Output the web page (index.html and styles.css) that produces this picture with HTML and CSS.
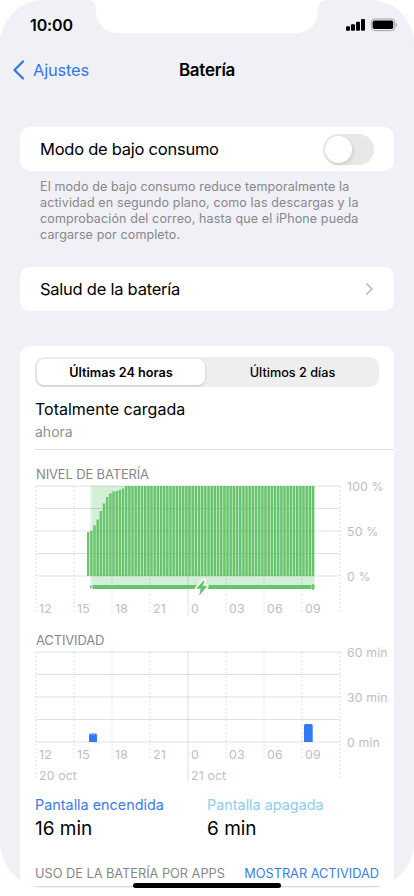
FILE: index.html
```html
<!DOCTYPE html>
<html lang="es">
<head>
    <meta charset="UTF-8">
    <meta name="viewport" content="width=device-width, initial-scale=1.0">
    <title>Batería</title>
    <link rel="stylesheet" href="styles.css">
</head>
<body>
<div class="phone">
    <svg class="notch" width="238" height="34" viewBox="0 0 238 34">
        <path d="M0 0 C5 0 7.800 3 7.800 9 C7.800 23 16 33.200 32 33.200 H206 C222 33.200 230.200 23 230.200 9 C230.200 3 233 0 238 0 Z" fill="#fff"/>
    </svg>

    <header class="status">
        <span class="time">10:00</span>
        <svg width="52" height="14" viewBox="0 0 52 14">
            <rect x="0" y="8.300" width="4" height="4.500" rx="1"/>
            <rect x="5" y="6.300" width="4" height="6.500" rx="1"/>
            <rect x="10" y="3.700" width="4" height="9.100" rx="1"/>
            <rect x="15" y="1" width="4" height="11.800" rx="1"/>
            <rect x="25.200" y="1" width="23.600" height="11.600" rx="3.300" fill="none" stroke="#a3a3a7"/>
            <rect x="26.600" y="2.500" width="20.600" height="8.600" rx="1.800"/>
            <path d="M49.800 4.700 C51.500 5.500 51.500 8.100 49.800 8.900 Z" fill="#a3a3a7"/>
        </svg>
    </header>

    <nav class="nav">
        <a class="back">
            <svg width="14" height="20" viewBox="0 0 14 20"><path d="M11 1.500 L2.500 10 L11 18.500" fill="none" stroke="#3478e5" stroke-width="2.300" stroke-linecap="round" stroke-linejoin="round"/></svg>
            <span class="back-text">Ajustes</span>
        </a>
        <h1>Batería</h1>
    </nav>

    <main>
        <div class="card row">
            <span>Modo de bajo consumo</span>
            <span class="switch"></span>
        </div>
        <p class="note">El modo de bajo consumo reduce temporalmente la<br>actividad en segundo plano, como las descargas y la<br>comprobación del correo, hasta que el iPhone pueda<br>cargarse por completo.</p>

        <div class="card row">
            <span>Salud de la batería</span>
            <svg width="9" height="14" viewBox="0 0 9 14"><path d="M1.800 1.800 L7 7 L1.800 12.200" fill="none" stroke="#c3c3c6" stroke-width="1.800" stroke-linecap="round" stroke-linejoin="round"/></svg>
        </div>

        <section class="card usage">
            <div class="tabs">
                <span class="tab active">Últimas 24 horas</span>
                <span class="tab">Últimos 2 días</span>
            </div>
            <div class="charge">
                <div class="charge-title">Totalmente cargada</div>
                <div class="charge-sub">ahora</div>
            </div>

            <h2 class="t-nivel">NIVEL DE BATERÍA</h2>
            <svg class="chart" width="359" height="136" viewBox="0 0 359 136">
                <rect x="55" y="4" width="224.500" height="102" fill="#d3f0d6"/>
                <rect x="55" y="4" width="2" height="102" fill="#e6f7e8"/>
                <g class="grid">
                    <path class="thick" d="M1 4H305M1 49H305M1 94H305"/>
                    <path class="thin" d="M1 26.500H305M1 71.500H305"/>
                    <path class="dots" d="M1 4V132M39 4V132M77 4V132M115 4V132M191 4V132M229 4V132M267 4V132M305 4V132"/>
                    <path class="thick" d="M153 4V134"/>
                </g>
                <g id="levels" fill="#5cbe62" fill-opacity=".9"></g>
                <path d="M57.500 105H276" stroke="#68c36e" stroke-width="4"/>
                <path d="M55 103 L57 105 L55 107 Z M276.500 105 a1.500 2 0 0 1 3 -1.500 v3 a1.500 2 0 0 1 -3 -1.500" fill="#68c36e"/>
                <path d="M169 98.500 L162 106.300 H166.300 L164.700 112.500 L171.700 104.200 H167.500 Z" fill="#68c36e" stroke="#fff" stroke-width="4" stroke-linejoin="round" paint-order="stroke"/>
                <path d="M169 98.500 L162 106.300 H166.300 L164.700 112.500 L171.700 104.200 H167.500 Z" fill="#68c36e" stroke="#68c36e" stroke-width=".8" stroke-linejoin="round"/>
                <g class="labels">
                    <text x="4" y="131">12</text>
                    <text x="42" y="131">15</text>
                    <text x="80" y="131">18</text>
                    <text x="118" y="131">21</text>
                    <text x="156" y="131">0</text>
                    <text x="194" y="131">03</text>
                    <text x="232" y="131">06</text>
                    <text x="270" y="131">09</text>
                    <text x="312" y="9">100 %</text>
                    <text x="312" y="54">50 %</text>
                    <text x="312" y="99">0 %</text>
                </g>
            </svg>

            <h2 class="t-actividad">ACTIVIDAD</h2>
            <svg class="chart" width="359" height="136" viewBox="0 0 359 136">
                <g class="grid">
                    <path class="thick" d="M1 4H305M1 49H305M1 94H305"/>
                    <path class="thin" d="M1 26.500H305M1 71.500H305"/>
                    <path class="dots" d="M1 4V132M39 4V112M77 4V112M115 4V112M191 4V112M229 4V112M267 4V112M305 4V132"/>
                    <path class="thick" d="M153 4V134"/>
                </g>
                <path d="M54 94V86.500a1.500 1.500 0 0 1 1.500-1.500h5a1.500 1.500 0 0 1 1.500 1.500V94Z" fill="#7cc4f5"/>
                <rect x="54" y="86.500" width="8" height="7.500" fill="#3478f6"/>
                <path d="M269 94V77.500a1.500 1.500 0 0 1 1.500-1.500h5.700a1.500 1.500 0 0 1 1.500 1.500V94Z" fill="#3478f6"/>
                <g class="labels">
                    <text x="4" y="111">12</text>
                    <text x="42" y="111">15</text>
                    <text x="80" y="111">18</text>
                    <text x="118" y="111">21</text>
                    <text x="156" y="111">0</text>
                    <text x="194" y="111">03</text>
                    <text x="232" y="111">06</text>
                    <text x="270" y="111">09</text>
                    <text x="4" y="131.500">20 oct</text>
                    <text x="156" y="131.500">21 oct</text>
                    <text x="312" y="9">60 min</text>
                    <text x="312" y="54">30 min</text>
                    <text x="312" y="99">0 min</text>
                </g>
            </svg>

            <div class="screen">
                <div>
                    <div class="screen-on">Pantalla encendida</div>
                    <div class="mins">16 min</div>
                </div>
                <div>
                    <div class="screen-off">Pantalla apagada</div>
                    <div class="mins">6 min</div>
                </div>
            </div>

            <div class="apps">
                <span>USO DE LA BATERÍA POR APPS</span>
                <a class="show-activity">MOSTRAR ACTIVIDAD</a>
            </div>
        </section>
    </main>
    <div class="home-bar"></div>
</div>

<script>
    // tops of the charging ramp, the rest of the bars are at 100 %
    const ramp = [50, 49, 43.5, 37.5, 29, 21.5, 15, 11.5, 9.5, 9, 8, 6.5];
    let bars = "";
    for (let i = 0; i < 72; i++) {
        const x = 52 + i * 19 / 6;
        const y = i < ramp.length ? ramp[i] : 4;
        bars += `<rect x="${x}" y="${y}" width="2.400" height="${94 - y}"/>`;
    }
    document.getElementById("levels").innerHTML = bars;
</script>
</body>
</html>
```

FILE: styles.css
```css
* {
    box-sizing: border-box;
}
body {
    margin: 0;
    background: #fff;
    font-family: Inter, sans-serif;
    color: #000;
    height: 896px;
    overflow: hidden;
}
.phone {
    position: relative;
    width: 414px;
    height: 888px;
    background: #f1f0f6;
    border-radius: 44px 44px 46px 46px;
    overflow: hidden;
}
.notch {
    position: absolute;
    left: 88px;
    top: 0;
}
.status {
    height: 50px;
    padding: 18px 16px 0 30px;
    display: flex;
    justify-content: space-between;
    align-items: flex-start;
}
.time {
    font-size: 16px;
    line-height: 14px;
    font-weight: 600;
    letter-spacing: -.1px;
}
.nav {
    height: 40px;
    display: grid;
    grid-template-columns: 1fr auto 1fr;
    align-items: center;
    padding: 0 12px;
}
.back {
    display: flex;
    align-items: center;
    gap: 7px;
    color: #3478e5;
    font-size: 16.500px;
    letter-spacing: -.2px;
}
h1 {
    margin: 0;
    font-size: 17px;
    font-weight: 600;
    letter-spacing: -.25px;
}
main {
    padding: 37px 20px 0;
}
.card {
    background: #fff;
    border-radius: 10px;
}
.row {
    height: 44px;
    padding: 0 20px;
    display: flex;
    align-items: center;
    justify-content: space-between;
    font-size: 16.500px;
    letter-spacing: -.25px;
}
.switch {
    width: 51px;
    height: 31px;
    border-radius: 16px;
    background: #e8e8e9;
    padding: 2px;
}
.switch::after {
    content: "";
    display: block;
    width: 27px;
    height: 27px;
    border-radius: 50%;
    background: #fff;
    box-shadow: 1px 2px 4px rgba(0, 0, 0, .12);
}
.note {
    margin: 8px 0 24px;
    padding-left: 20px;
    font-size: 12.500px;
    letter-spacing: .12px;
    line-height: 16px;
    color: #87878c;
    white-space: nowrap;
}
.usage {
    margin-top: 35px;
    height: 541px;
    padding: 11px 0 0 15px;
    border-bottom: 1px solid #d9d9dc;
    border-radius: 10px 10px 0 0;
}
.tabs {
    width: 344px;
    height: 30px;
    padding: 2px;
    display: flex;
    border-radius: 9px;
    background: #eee;
}
.tab {
    flex: 1;
    display: flex;
    align-items: center;
    justify-content: center;
    padding-left: 3px;
    font-size: 12.700px;
    font-weight: 500;
}
.tab.active {
    flex: none;
    width: 168px;
    padding: 0;
    background: #fff;
    border-radius: 7px;
    font-weight: 600;
    box-shadow: 0 1px 3px rgba(0, 0, 0, .18);
}
.charge {
    height: 63px;
    padding-top: 11px;
    border-bottom: 1px solid #dededf;
}
.charge-title {
    font-size: 16px;
    line-height: 22px;
}
.charge-sub {
    font-size: 14px;
    line-height: 24px;
    color: #8f8f92;
}
h2 {
    margin: 0;
    padding: 16px 0 0 1px;
    height: 32px;
    font-size: 13px;
    line-height: 16px;
    font-weight: 400;
    letter-spacing: -.15px;
    color: #87878a;
}
.chart {
    display: block;
    overflow: visible;
}
h2.t-actividad {
    height: 30px;
    padding-top: 14px;
}
.thick, .thin, .dots {
    fill: none;
    stroke: #000;
}
.thick {
    stroke-width: 2px;
    stroke-opacity: .06;
}
.thin {
    stroke-width: 1px;
    stroke-opacity: .12;
}
.dots {
    stroke-width: 2px;
    stroke-opacity: .06;
    stroke-dasharray: 2 2;
}
.labels {
    fill: #bdbdbf;
    font-size: 12.300px;
    letter-spacing: .15px;
}
.screen {
    display: grid;
    grid-template-columns: 172px 1fr;
    padding-top: 10px;
    font-size: 14.400px;
    line-height: 22px;
}
.screen-on {
    color: #3d7de0;
}
.screen-off {
    color: #90cdee;
}
.mins {
    font-size: 19px;
    line-height: 25px;
}
.apps {
    display: flex;
    justify-content: space-between;
    width: 344px;
    padding-top: 23px;
    font-size: 12.800px;
    line-height: 20px;
    letter-spacing: -.03px;
    color: #87878a;
    white-space: nowrap;
}
.show-activity {
    color: #3d7de0;
}
.home-bar {
    position: absolute;
    left: 133px;
    bottom: 0;
    width: 148px;
    height: 5px;
    border-radius: 3px;
    background: #000;
}
```
